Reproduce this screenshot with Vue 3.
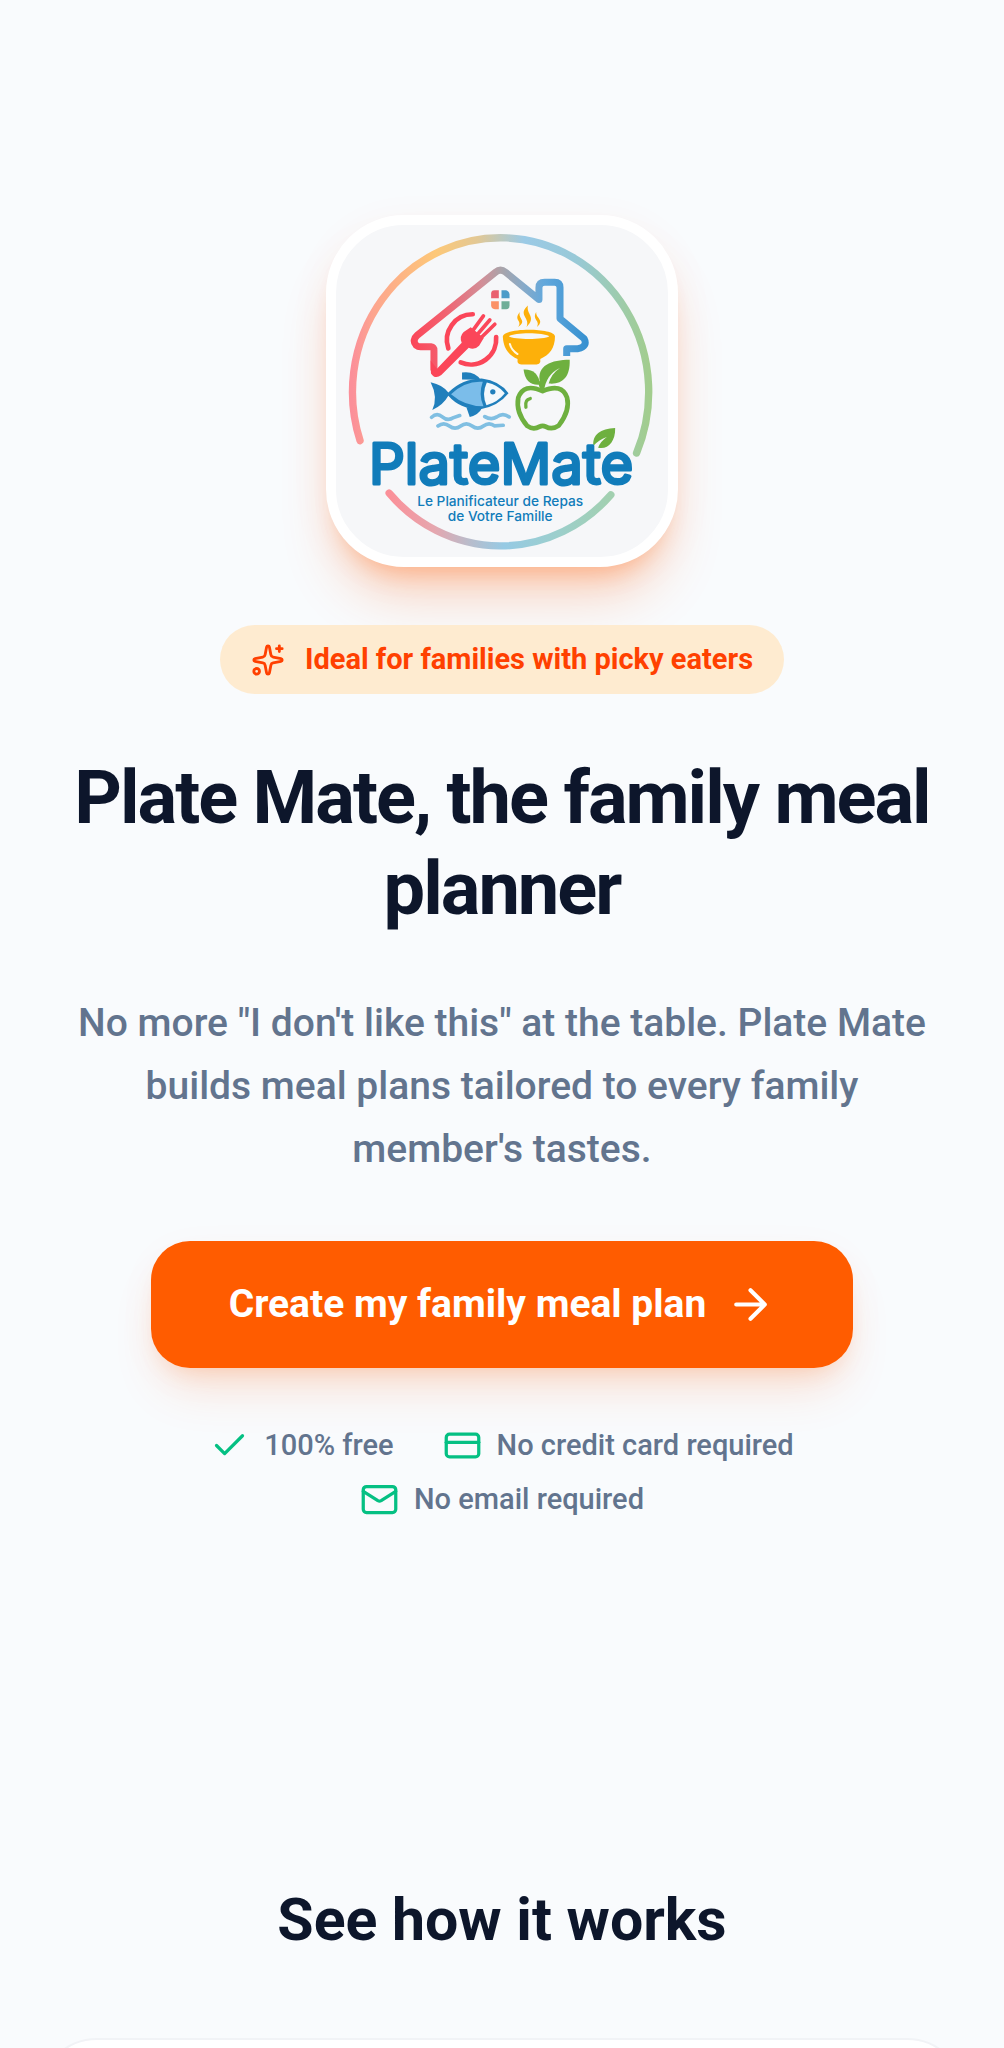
<template>
  <main class="page">
    <section class="hero">
      <div class="logo-card">
        <svg class="logo" viewBox="138 105 993 993" role="img" aria-label="PlateMate">
          <defs>
            <linearGradient id="ring-top" gradientUnits="userSpaceOnUse" x1="187" y1="0" x2="1073" y2="0">
              <stop offset="0" stop-color="#fb8f99" />
              <stop offset="0.07" stop-color="#fda58f" />
              <stop offset="0.28" stop-color="#fdc878" />
              <stop offset="0.42" stop-color="#e3c894" />
              <stop offset="0.58" stop-color="#9bcae6" />
              <stop offset="0.75" stop-color="#98c9d8" />
              <stop offset="0.87" stop-color="#9ccbb6" />
              <stop offset="1" stop-color="#a2cd8e" />
            </linearGradient>
            <linearGradient id="ring-bottom" gradientUnits="userSpaceOnUse" x1="297" y1="0" x2="960" y2="0">
              <stop offset="0" stop-color="#fb9099" />
              <stop offset="0.2" stop-color="#e6a6ae" />
              <stop offset="0.36" stop-color="#b9bccb" />
              <stop offset="0.52" stop-color="#96cae4" />
              <stop offset="0.76" stop-color="#9ccfcc" />
              <stop offset="1" stop-color="#a2d0b0" />
            </linearGradient>
            <linearGradient id="house" gradientUnits="userSpaceOnUse" x1="363" y1="0" x2="893" y2="0">
              <stop offset="0" stop-color="#fb4659" />
              <stop offset="0.18" stop-color="#f3606f" />
              <stop offset="0.4" stop-color="#d28f98" />
              <stop offset="0.51" stop-color="#a9a4aa" />
              <stop offset="0.63" stop-color="#88aac8" />
              <stop offset="0.75" stop-color="#62a8dc" />
              <stop offset="1" stop-color="#3590d0" />
            </linearGradient>
          </defs>

          <!-- ring -->
          <g fill="none" stroke-width="22" stroke-linecap="round">
            <path d="M210 750A443 461 0 1 1 1037 787" stroke="url(#ring-top)" />
            <path d="M297 907A443 461 0 0 0 960 912" stroke="url(#ring-bottom)" />
          </g>

          <!-- house -->
          <path
            d="M828 497V475H862Q892 468 880 445L808 385V292Q808 276 792 276H762Q745 276 745 292V328L645 246Q630 234 615 246L382 434Q364 450 378 465Q384 470 394 469H422Q431 470 431 480V540"
            fill="none" stroke="url(#house)" stroke-width="21" stroke-linejoin="round"
          />
          <path d="M602 310q0-10 10-10h13v24h-23z" fill="#e9606f" />
          <path d="M633 300h14q10 4 10 13v11h-24z" fill="#4c9cc9" />
          <path d="M602 333h23v24h-12q-11-2-11-12z" fill="#fb9166" />
          <path d="M633 333h24v13q0 11-10 11h-14z" fill="#6fae98" />

          <!-- plate and fork -->
          <g fill="none" stroke="#fb4659" stroke-linecap="round">
            <path d="M547 372A77 77 0 0 0 474 474" stroke-width="14" />
            <path d="M511 516A76 76 0 0 0 617 440" stroke-width="14" />
            <path d="M547 421L579 377M562 431L598 389M574 440L613 402" stroke-width="11" />
          </g>
          <path d="M421 510L440 535L514 457Q506 438 520 425L541 411L580 443L566 466Q551 481 535 472L453 554Q434 568 422 549Z" fill="#fb4659" />

          <!-- bowl -->
          <g fill="#fdb00a">
            <path fill-rule="evenodd" d="M637 438C640 412 791 412 793 438C793 474 776 494 749 506V515Q747 522 738 522H693Q683 522 681 515V506C655 494 638 474 637 438ZM655 438C670 449 760 449 776 438C758 426 672 426 655 438Z" />
            <path d="M688 365C667 390 697 390 683 410C711 390 681 386 688 365ZM712 346C680 375 720 382 708 410C739 380 706 373 712 346ZM737 365C723 388 750 390 739 410C764 389 734 383 737 365Z" />
          </g>
          <path d="M658 461Q663 480 681 491" fill="none" stroke="#fff7e6" stroke-width="6" stroke-linecap="round" />

          <!-- fish -->
          <path d="M421 575Q458 583 474 606Q516 564 574 564Q628 571 654 608Q624 646 570 656Q511 658 474 616Q458 645 426 658Q444 620 421 575Z" fill="#207fbc" />
          <path d="M515 567L515 546Q554 541 570 568ZM528 650L538 679Q565 673 576 650Z" fill="#207fbc" />
          <path d="M482 611Q525 570 577 574Q563 613 579 647Q523 647 482 611Z" fill="#7bbdea" />
          <path d="M589 576Q623 583 643 608Q623 634 588 644Q573 610 589 576Z" fill="#f3f8fc" />
          <circle cx="607" cy="604" r="8" fill="#207fbc" />
          <path
            d="M424 680Q440 665 456 679T490 681L508 675M583 678Q602 690 619 679Q637 665 656 679M443 706Q460 693 477 706T511 706T545 706T579 706T613 706L638 704"
            fill="none" stroke="#80bfe2" stroke-width="11" stroke-linecap="round"
          />

          <!-- apple -->
          <path
            d="M756 602Q699 576 683 622Q675 665 710 706Q728 719 747 708Q756 703 765 708Q784 719 804 705Q839 660 829 621Q813 577 756 602Z"
            fill="none" stroke="#6eb03f" stroke-width="14" stroke-linejoin="round"
          />
          <g fill="#6eb03f">
            <path d="M747 603Q750 578 727 561Q741 564 748 574C738 525 782 508 837 508C839 560 815 583 774 579Q783 549 808 533Q766 552 760 603Z" />
            <path d="M699 537Q742 535 749 582Q705 587 699 537Z" />
            <path d="M908 765C904 733 929 714 973 712C974 754 950 778 922 771Q928 753 948 739Q925 747 908 765Z" />
          </g>
          <path d="M706 650Q702 627 719 624" fill="none" stroke="#6eb03f" stroke-width="10" stroke-linecap="round" />

          <g class="logo-text" text-anchor="middle">
            <text class="logo-name" x="632" y="881">PlateMate</text>
            <text class="logo-tagline" x="629" y="944">Le Planificateur de Repas</text>
            <text class="logo-tagline" x="629" y="990">de Votre Famille</text>
          </g>
        </svg>
      </div>

      <p class="badge">
        <svg class="badge-icon" viewBox="0 0 24 24" aria-hidden="true">
          <path d="M11.017 2.814a1 1 0 0 1 1.966 0l1.051 5.558a2 2 0 0 0 1.594 1.594l5.558 1.051a1 1 0 0 1 0 1.966l-5.558 1.051a2 2 0 0 0-1.594 1.594l-1.051 5.558a1 1 0 0 1-1.966 0l-1.051-5.558a2 2 0 0 0-1.594-1.594l-5.558-1.051a1 1 0 0 1 0-1.966l5.558-1.051a2 2 0 0 0 1.594-1.594z" />
          <path d="M20 2v4M22 4h-4" />
          <circle cx="4" cy="20" r="2" />
        </svg>
        <span>Ideal for families with picky eaters</span>
      </p>

      <h1>Plate Mate, the family meal planner</h1>
      <p class="intro">
        No more "I don't like this" at the table. Plate Mate builds meal plans tailored to every family member's tastes.
      </p>

      <button type="button" class="cta">
        <span>Create my family meal plan</span>
        <svg class="cta-icon" viewBox="0 0 24 24" aria-hidden="true">
          <path d="M5 12h14M12 5l7 7-7 7" />
        </svg>
      </button>

      <ul class="perks">
        <li v-for="perk in perks" :key="perk.label">
          <svg class="perk-icon" viewBox="0 0 24 24" aria-hidden="true">
            <rect v-if="perk.box" x="2" :y="perk.box.y" width="20" :height="perk.box.height" rx="2" />
            <path :d="perk.path" />
          </svg>
          <span>{{ perk.label }}</span>
        </li>
      </ul>
    </section>

    <section class="demo">
      <h2>See how it works</h2>
      <div class="demo-card"></div>
    </section>
  </main>
</template>

<script setup>
const perks = [
  { label: '100% free', path: 'M20 6 9 17l-5-5' },
  { label: 'No credit card required', path: 'M2 10h20', box: { y: 5, height: 14 } },
  { label: 'No email required', path: 'm22 7-8.991 5.727a2 2 0 0 1-2.009 0L2 7', box: { y: 4, height: 16 } },
]
</script>

<style>
body {
  margin: 0;
  background: #f9fbfd;
}
</style>

<style scoped>
.page {
  overflow: hidden;
  background: #f9fbfd;
  color: #0d162b;
  font-family: Roboto, "Liberation Sans", sans-serif;
}

.hero {
  display: flex;
  flex-direction: column;
  align-items: center;
  padding: 215px 58px 180px;
  text-align: center;
}

.logo-card {
  box-sizing: border-box;
  width: 352px;
  height: 352px;
  margin-bottom: 58px;
  border: 10px solid #fff;
  border-radius: 78px;
  background: #f6f7f9;
  box-shadow: 0 40px 56px -12px rgba(255, 92, 0, 0.24), 0 20px 24px -15px rgba(255, 92, 0, 0.3), 0 10px 40px rgba(255, 92, 0, 0.06);
}

.logo {
  display: block;
  width: 100%;
}

.logo-text {
  fill: #117cba;
  stroke: #117cba;
  stroke-linejoin: round;
  font-family: Inter, sans-serif;
}

.logo-name {
  font-size: 168px;
  font-weight: 400;
  stroke-width: 9px;
}

.logo-tagline {
  font-size: 41px;
  font-weight: 500;
  stroke-width: 0;
}

.badge {
  display: flex;
  align-items: center;
  gap: 20px;
  margin: 0 0 58px;
  padding: 15px 31px;
  border-radius: 39px;
  background: #feebd0;
  color: #ff4000;
  font-size: 29px;
  font-weight: 700;
  line-height: 39px;
}

.badge-icon,
.cta-icon,
.perk-icon {
  flex: none;
  fill: none;
  stroke: currentColor;
  stroke-width: 2;
  stroke-linecap: round;
  stroke-linejoin: round;
}

.badge-icon {
  width: 34px;
  height: 34px;
}

h1,
h2 {
  margin: 0;
  font-weight: 700;
}

h1 {
  margin-bottom: 58px;
  font-size: 74px;
  line-height: 91px;
  letter-spacing: -2px;
}

.intro {
  margin: 0 0 60px;
  color: #62748e;
  font-size: 39px;
  font-weight: 500;
  line-height: 63px;
}

.cta {
  display: flex;
  align-items: center;
  gap: 20px;
  margin: 0 0 58px;
  padding: 34px 78px;
  border: 0;
  border-radius: 39px;
  background: #ff5c00;
  color: #fff;
  box-shadow: 0 30px 50px -12px rgba(255, 92, 0, 0.16), 0 12px 24px -12px rgba(255, 92, 0, 0.2), 0 10px 40px rgba(255, 92, 0, 0.04);
  font: inherit;
  font-size: 39px;
  font-weight: 700;
  line-height: 59px;
}

.cta-icon {
  width: 49px;
  height: 49px;
}

.perks {
  display: flex;
  flex-wrap: wrap;
  justify-content: center;
  gap: 15px 49px;
  margin: 0;
  padding: 0;
  list-style: none;
}

.perks li {
  display: flex;
  align-items: center;
  gap: 15px;
  color: #62748e;
  font-size: 29px;
  font-weight: 500;
  line-height: 39px;
}

.perk-icon {
  width: 39px;
  height: 39px;
  color: #05c083;
}

.demo {
  padding: 181px 39px 58px;
}

h2 {
  font-size: 59px;
  line-height: 79px;
  text-align: center;
}

.demo-card {
  min-height: 600px;
  margin-top: 79px;
  border: 2px solid #f1f3f6;
  border-radius: 58px;
  background: #fff;
}
</style>
